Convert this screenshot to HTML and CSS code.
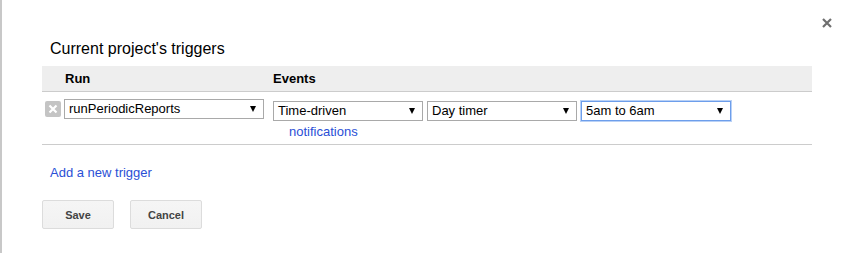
FILE: index.html
```html
<!doctype html>
<html lang="en">
<head>
    <meta charset="UTF-8">
    <title>Current project's triggers</title>
    <link rel="stylesheet" href="styles.css">
</head>
<body>

<div class="dialog">
    <!--关闭按钮-->
    <span class="close" title="Close">
        <svg width="10" height="10" viewBox="0 0 10 10">
            <path d="M1 1 L9 9 M9 1 L1 9" stroke="#6f6f6f" stroke-width="2.2" fill="none"/>
        </svg>
    </span>

    <div class="title">Current project's triggers</div>

    <div class="triggers">
        <div class="head">
            <div class="head-run">Run</div>
            <div class="head-events">Events</div>
        </div>

        <div class="trigger-row">
            <span class="remove">
                <svg width="10" height="10" viewBox="0 0 10 10">
                    <path d="M1.5 1.5 L8.5 8.5 M8.5 1.5 L1.5 8.5" stroke="#fff" stroke-width="2.2" fill="none"/>
                </svg>
            </span>
            <div class="dropdown run-select">
                <span>runPeriodicReports</span>
                <i class="arrow"></i>
            </div>
            <div class="events">
                <div class="event-selects">
                    <div class="dropdown">
                        <span>Time-driven</span>
                        <i class="arrow"></i>
                    </div>
                    <div class="dropdown">
                        <span>Day timer</span>
                        <i class="arrow"></i>
                    </div>
                    <div class="dropdown focused">
                        <span>5am to 6am</span>
                        <i class="arrow"></i>
                    </div>
                </div>
                <a class="link notify" href="#">notifications</a>
            </div>
        </div>
    </div>

    <a class="link add" href="#">Add a new trigger</a>

    <div class="buttons">
        <button class="btn">Save</button>
        <button class="btn">Cancel</button>
    </div>
</div>

</body>
</html>
```

FILE: styles.css
```css
body {
    margin: 0;
    font-family: "Liberation Sans", Arial, sans-serif;
    font-size: 13px;
    color: #000;
    background: #fff;
}
.dialog {
    position: relative;
    height: 253px;
    box-sizing: border-box;
    border-left: 2px solid #c8c8c8;
    padding: 40px 0 0 40px;
}
.close {
    position: absolute;
    top: 18px;
    right: 19px;
    width: 10px;
    height: 10px;
    display: block;
}
.close svg {
    display: block;
}
.title {
    font-size: 16px;
    line-height: 18px;
    padding-left: 8px;
    margin-bottom: 8px;
}
.triggers {
    width: 770px;
    border-bottom: 1px solid #ccc;
}
.head {
    display: flex;
    height: 25px;
    line-height: 25px;
    background: #eee;
    border-bottom: 1px solid #ccc;
    font-weight: bold;
    padding-left: 23px;
}
.head-run {
    width: 208px;
}
.trigger-row {
    display: flex;
    align-items: flex-start;
    height: 52px;
    box-sizing: border-box;
    padding: 7px 0 0 3px;
}
.remove {
    width: 16px;
    height: 16px;
    margin: 2px 3px 0 0;
    background: #c4c4c4;
    border-radius: 2px;
    display: flex;
    align-items: center;
    justify-content: center;
}
.remove svg {
    display: block;
}
.dropdown {
    display: flex;
    align-items: center;
    justify-content: space-between;
    width: 150px;
    height: 20px;
    box-sizing: border-box;
    border: 1px solid #a9a9a9;
    padding: 0 7px 0 4px;
    line-height: 18px;
    background: #fff;
}
.dropdown.run-select {
    width: 200px;
    margin-right: 9px;
}
.dropdown.focused {
    border-color: #6d9eeb;
    box-shadow: 0 0 0 1px #b9d1f6;
}
.arrow {
    width: 0;
    height: 0;
    border-left: 3.5px solid transparent;
    border-right: 3.5px solid transparent;
    border-top: 6px solid #000;
}
.events {
    margin-top: 2px;
}
.event-selects {
    display: flex;
    gap: 4px;
}
.link {
    color: #2a4fd6;
    text-decoration: none;
    line-height: 15px;
    display: block;
}
.notify {
    margin: 3px 0 0 16px;
}
.add {
    margin: 20px 0 0 8px;
    width: fit-content;
}
.buttons {
    display: flex;
    gap: 16px;
    margin-top: 20px;
}
.btn {
    width: 72px;
    height: 29px;
    border: 1px solid #dcdcdc;
    border-radius: 2px;
    background: linear-gradient(#f5f5f5, #f1f1f1);
    color: #444;
    font-family: "Liberation Sans", Arial, sans-serif;
    font-size: 11px;
    font-weight: bold;
    padding: 0;
}
```
